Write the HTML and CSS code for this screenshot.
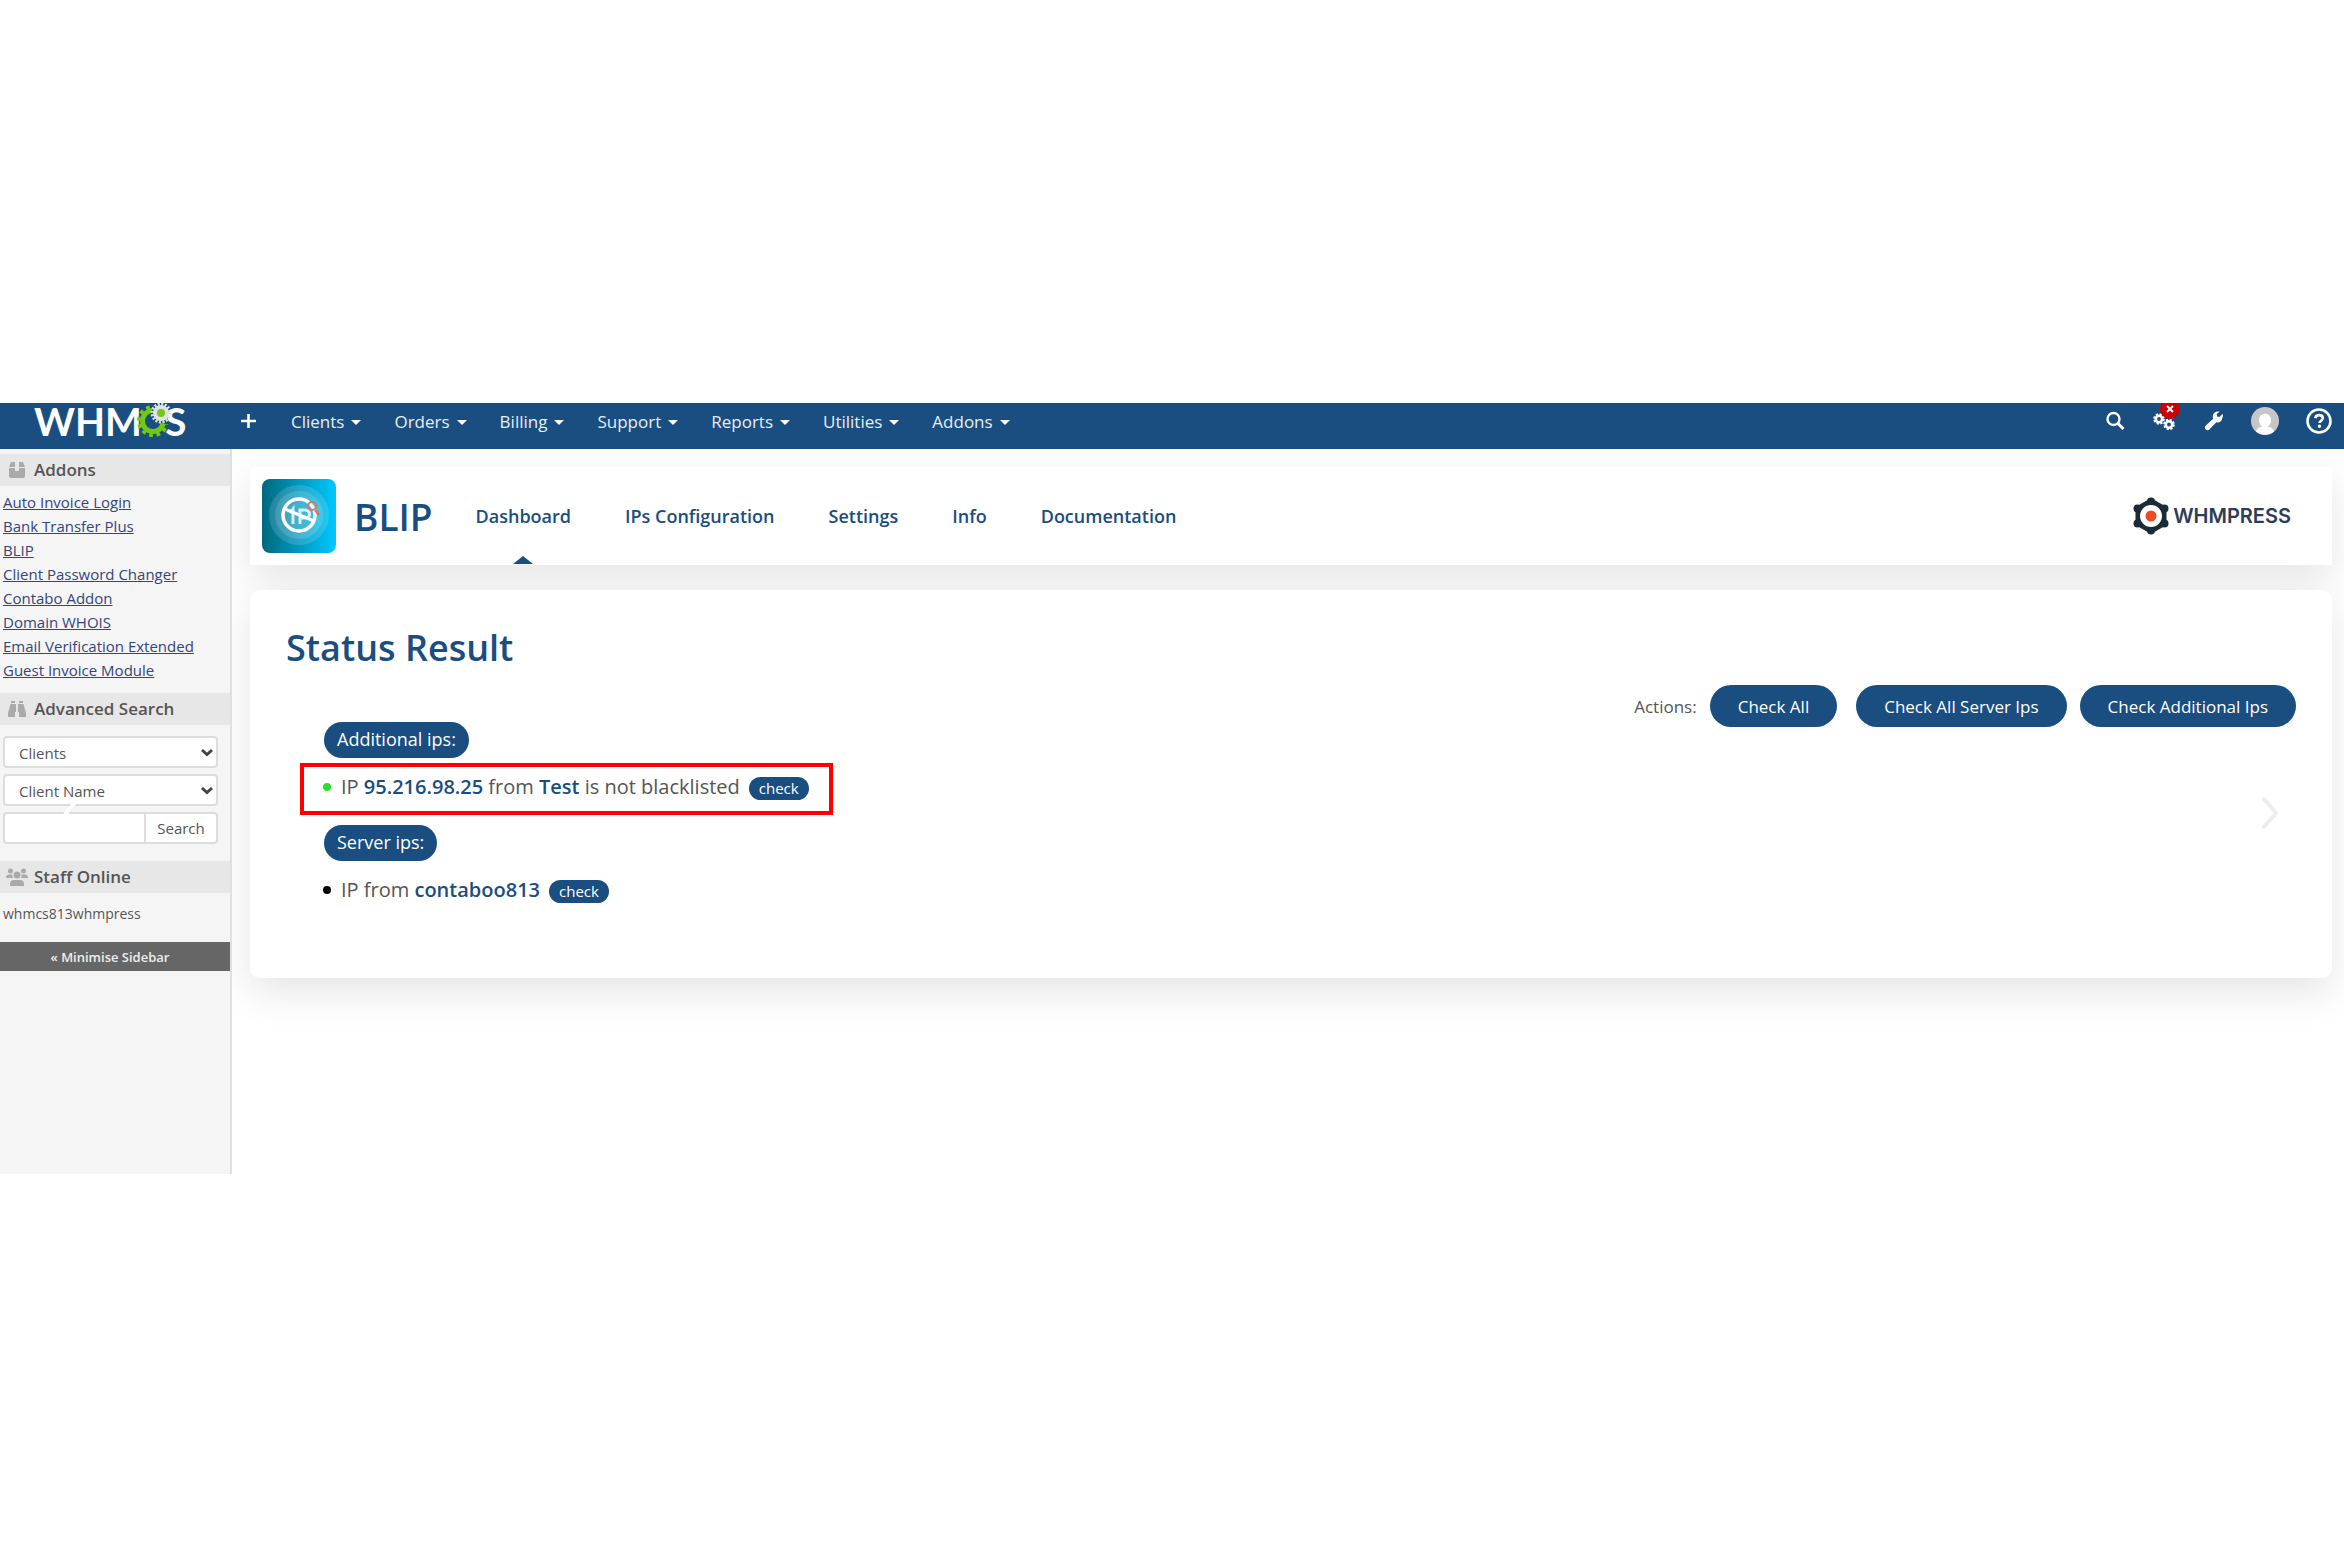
FILE: index.html
```html
<!DOCTYPE html>
<html lang="en">
<head>
<meta charset="utf-8">
<title>BLIP - Status Result</title>
<link rel="stylesheet" href="styles.css">
</head>
<body>
<div class="app">
  <header class="topbar">
    <a class="brand" href="#" aria-label="WHMCS">
      <svg width="156" height="46" viewBox="0 0 156 46">
        <text class="brand-text" x="-1" y="33">WHM</text>
        <circle cx="118" cy="18" r="10.500" fill="none" stroke="#70c912" stroke-width="5"/>
        <circle cx="118" cy="18" r="14" fill="none" stroke="#70c912" stroke-width="4" stroke-dasharray="3.700 3.630"/>
        <path d="M121 19l8-4 10 2-3 5-5-1z" fill="#1a4d80"/>
        <circle cx="126" cy="10" r="10" fill="#1a4d80"/>
        <text class="brand-text" x="130" y="33">S</text>
        <circle cx="126" cy="10" r="6" fill="#70c912" stroke="#dfe2df" stroke-width="4"/>
        <circle cx="126" cy="10" r="9" fill="none" stroke="#dfe2df" stroke-width="3" stroke-dasharray="2 1.534"/>
      </svg>
    </a>
    <nav class="menu">
      <a href="#" aria-label="Add"><svg width="15" height="16" viewBox="0 0 15 16"><path d="M7.500 1v14M0 8h15" stroke="#fff" stroke-width="2.600"/></svg></a>
      <a href="#">Clients <i class="caret"></i></a>
      <a href="#">Orders <i class="caret"></i></a>
      <a href="#">Billing <i class="caret"></i></a>
      <a href="#">Support <i class="caret"></i></a>
      <a href="#">Reports <i class="caret"></i></a>
      <a href="#">Utilities <i class="caret"></i></a>
      <a href="#">Addons <i class="caret"></i></a>
    </nav>
    <nav class="tools">
      <a href="#" aria-label="Search"><svg width="20" height="20" viewBox="0 0 20 20" fill="none" stroke="#fff"><circle cx="7.500" cy="8" r="6" stroke-width="2.400"/><path d="M12 12.500l5.500 5.500" stroke-width="3"/></svg></a>
      <a class="alerts" href="#" aria-label="Automation status"><svg width="24" height="20" viewBox="0 0 24 20" fill="none" stroke="#fff"><circle cx="6" cy="8" r="3.200" stroke-width="2.600"/><circle cx="6" cy="8" r="4.800" stroke-width="2" stroke-dasharray="2.200 1.570"/><circle cx="16" cy="13.500" r="3.200" stroke-width="2.600"/><circle cx="16" cy="13.500" r="4.800" stroke-width="2" stroke-dasharray="2.200 1.570"/></svg><span class="badge"><svg width="8" height="8" viewBox="0 0 8 8"><path d="M1 1l6 6M7 1l-6 6" stroke="#fff" stroke-width="2"/></svg></span></a>
      <a href="#" aria-label="Configuration"><svg width="20" height="20" viewBox="0 0 20 20"><path d="M18.600 6.200c.8-2 .2-3-.2-3.200L15.500 6l-2.300-.5-.5-2.400 2.800-2.400C12 .2 8.800 2 8.800 5.500c0 1 .1 1.500.4 2.200L1.800 14.500c-1.500 1.400-1 3.300.1 4.200s2.900.8 4-.6l6.400-6.800c3 .9 5.500-.9 6.300-5.100z" fill="#fff"/></svg></a>
      <a href="#" aria-label="My account"><svg width="28" height="28" viewBox="0 0 28 28"><circle cx="14" cy="14" r="14" fill="#c6c6c6"/><ellipse cx="14" cy="13.500" rx="6" ry="7" fill="#fff"/><path d="M5 24.500c1-4 5-5 9-5s8 1 9 5a14 14 0 0 1-18 0z" fill="#fff"/></svg></a>
      <a href="#" aria-label="Help"><svg width="26" height="26" viewBox="0 0 26 26" fill="none" stroke="#fff"><circle cx="13" cy="13" r="11.500" stroke-width="2.600"/><path d="M9.300 10.200c.4-2.300 2-3.100 3.800-3.100 2 0 3.700 1.100 3.700 3 0 2.500-3.300 2.600-3.300 4.900" stroke-width="2.600"/><circle cx="13.400" cy="18.300" r="1" stroke-width="1.500" fill="#fff"/></svg></a>
    </nav>
  </header>

  <div class="body">
    <aside class="sidebar">
      <h2 class="side-title"><svg width="18" height="18" viewBox="0 0 18 18" fill="#aaa"><path d="M3 1h4v5H1zM11 1h4l2 5h-6zM1 7h6v3h4V7h6v8a2 2 0 0 1-2 2H3a2 2 0 0 1-2-2z"/></svg>Addons</h2>
      <ul class="links">
        <li><a href="#">Auto Invoice Login</a></li>
        <li><a href="#">Bank Transfer Plus</a></li>
        <li><a href="#">BLIP</a></li>
        <li><a href="#">Client Password Changer</a></li>
        <li><a href="#">Contabo Addon</a></li>
        <li><a href="#">Domain WHOIS</a></li>
        <li><a href="#">Email Verification Extended</a></li>
        <li><a href="#">Guest Invoice Module</a></li>
      </ul>
      <h2 class="side-title"><svg width="18" height="18" viewBox="0 0 18 18" fill="#aaa"><path d="M3 1h4v2H3zM11 1h4v2h-4zM2.500 4H8v8H7v5H0v-4zM10 4h5.500L18 13v4h-7v-5h-1z"/></svg>Advanced Search</h2>
      <form class="search">
        <div class="pick">
          <select class="field" aria-label="Search type"><option>Clients</option></select>
          <svg class="arrow" width="14" height="9" viewBox="0 0 14 9"><path d="M2 2l5 4.500L12 2" fill="none" stroke="#444" stroke-width="3"/></svg>
        </div>
        <div class="pick">
          <select class="field" aria-label="Search field"><option>Client Name</option></select>
          <svg class="arrow" width="14" height="9" viewBox="0 0 14 9"><path d="M2 2l5 4.500L12 2" fill="none" stroke="#444" stroke-width="3"/></svg>
        </div>
        <div class="find">
          <input class="field" type="text" aria-label="Search term">
          <button class="find-button" type="button">Search</button>
        </div>
      </form>
      <h2 class="side-title"><svg width="22" height="18" viewBox="0 0 22 18" fill="#aaa"><circle cx="4.500" cy="3" r="2.500"/><circle cx="17.500" cy="3" r="2.500"/><circle cx="11" cy="7" r="3.500"/><path d="M0 10c0-2 1-3.500 3-3.500h3.500c-.5 2 .2 3 .8 3.500zM22 10c0-2-1-3.500-3-3.500h-3.500c.5 2-.2 3-.8 3.500zM4 18v-2c0-2.500 1.500-4 4-4h6c2.500 0 4 1.500 4 4v2z"/></svg>Staff Online</h2>
      <p class="staff">whmcs813whmpress</p>
      <button class="minimise" type="button">« Minimise Sidebar</button>
    </aside>

    <main class="content">
      <section class="card module">
        <svg width="74" height="74" viewBox="0 0 74 74">
          <defs><linearGradient id="tile"><stop offset="0" stop-color="#00687f"/><stop offset="1" stop-color="#00c8ff"/></linearGradient></defs>
          <rect width="74" height="74" rx="8" fill="url(#tile)"/>
          <circle cx="37" cy="36" r="30" fill="#fff" opacity=".14"/>
          <circle cx="37" cy="36" r="24" fill="#fff" opacity=".14"/>
          <g fill="none" stroke="#fff"><path d="M28 34l3-4v15M38 45V31h5c6 0 6 8 0 8h-5" stroke-width="3" opacity=".8"/><circle cx="37" cy="36" r="16" stroke-width="3.500"/><path d="M23 30l29 12" stroke-width="3"/></g>
          <g fill="none" stroke="#e2755f"><circle cx="50" cy="27" r="4" stroke-width="2"/><path d="M53 31l4 5" stroke-width="2.500"/></g>
        </svg>
        <h1 class="name">BLIP</h1>
        <nav class="tabs">
          <a class="active" href="#">Dashboard</a>
          <a href="#">IPs Configuration</a>
          <a href="#">Settings</a>
          <a href="#">Info</a>
          <a href="#">Documentation</a>
        </nav>
        <a class="vendor" href="#">
          <svg width="38" height="38" viewBox="0 0 38 38"><path d="M19 4l13 7.500v15L19 34 6 26.500v-15z" fill="#1b2b38" stroke="#1b2b38" stroke-width="5" stroke-linejoin="round"/><g fill="#1b2b38"><circle cx="19" cy="4.500" r="4"/><circle cx="32.500" cy="11.500" r="4"/><circle cx="32.500" cy="26.500" r="4"/><circle cx="19" cy="33.500" r="4"/><circle cx="5.500" cy="26.500" r="4"/><circle cx="5.500" cy="11.500" r="4"/></g><circle cx="19" cy="19" r="11" fill="#fff"/><circle cx="19" cy="19" r="5.500" fill="#f04a25"/></svg>
          WHMPRESS
        </a>
      </section>

      <section class="card status">
        <h2 class="title">Status Result</h2>
        <div class="actions">
          <span>Actions:</span>
          <button class="action lead" type="button">Check All</button>
          <button class="action" type="button">Check All Server Ips</button>
          <button class="action" type="button">Check Additional Ips</button>
        </div>
        <div class="results">
          <h3 class="group">Additional ips:</h3>
          <div class="row marked"><i class="dot ok"></i><p>IP <b>95.216.98.25</b> from <b>Test</b> is not blacklisted</p><button class="check" type="button">check</button></div>
          <h3 class="group">Server ips:</h3>
          <div class="row"><i class="dot"></i><p>IP from <b>contaboo813</b></p><button class="check" type="button">check</button></div>
        </div>
      </section>
    </main>
  </div>

  <button class="slide prev" type="button" aria-label="Previous"><svg width="20" height="34" viewBox="0 0 20 34"><path d="M16 3L4 17l12 14" fill="none" stroke="#fff" stroke-width="4" stroke-linecap="round"/></svg></button>
  <button class="slide next" type="button" aria-label="Next"><svg width="20" height="34" viewBox="0 0 20 34"><path d="M4 3l12 14L4 31" fill="none" stroke="#ededed" stroke-width="4" stroke-linecap="round"/></svg></button>
</div>
</body>
</html>
```
FILE: styles.css
```css
* {
  box-sizing: border-box;
}

body {
  margin: 0;
  padding-top: 403px;
  background: #fff;
  color: #555;
  font-family: "Open Sans", "Noto Sans", sans-serif;
  font-size: 17px;
}

h1, h2, h3, p, ul {
  margin: 0;
  padding: 0;
}

ul {
  list-style: none;
}

svg {
  display: block;
  flex: none;
}

a {
  color: inherit;
  text-decoration: none;
}

button, input, select {
  font: inherit;
  color: inherit;
}

.app {
  position: relative;
}

.topbar {
  display: flex;
  height: 46px;
  padding: 0 12px 0 35px;
  background: #1a4d80;
  color: #e8eef5;
}

.brand {
  width: 206px;
}

.brand svg {
  overflow: visible;
}

.brand-text {
  fill: #fff;
  font-family: Lato, sans-serif;
  font-size: 39px;
  font-weight: 700;
}

.menu, .tools {
  display: flex;
  align-items: center;
  height: 36px;
  gap: 33px;
}

.menu a {
  display: flex;
  align-items: center;
  gap: 7px;
}

.menu a:first-child {
  margin-right: 2px;
}

.caret {
  margin-top: 2px;
  border: 5px solid transparent;
  border-top-color: #fff;
  border-bottom: 0;
}

.tools {
  margin-left: auto;
  gap: 27px;
  overflow: hidden;
}

.alerts {
  position: relative;
}

.badge {
  position: absolute;
  top: -12px;
  right: -3px;
  display: grid;
  place-items: center;
  width: 20px;
  height: 20px;
  border-radius: 50%;
  background: #c00;
}

.body {
  display: flex;
}

.sidebar {
  flex: none;
  width: 232px;
  min-height: 725px;
  padding-top: 5px;
  border-right: 2px solid #e0e0e0;
  background: #f5f5f5;
  font-size: 15px;
}

.side-title {
  display: grid;
  grid-template-columns: 34px 1fr;
  align-items: center;
  height: 32px;
  padding-bottom: 1px;
  background: #e7e7e7;
  font-size: 17px;
  font-weight: 600;
}

.side-title svg {
  justify-self: center;
}

.links {
  padding: 4px 3px 11px;
  color: #34467a;
  line-height: 24px;
}

.links a {
  text-decoration: underline;
}

.search {
  display: grid;
  gap: 6px;
  padding: 11px 12px 17px 3px;
}

.pick {
  position: relative;
}

.field {
  display: block;
  width: 100%;
  height: 32px;
  padding: 2px 14px 0;
  appearance: none;
  border: 2px solid #ddd;
  border-radius: 4px;
  background: #fff;
}

.arrow {
  position: absolute;
  top: 12px;
  right: 4px;
}

.find {
  display: flex;
}

.find .field {
  flex: 1;
  min-width: 0;
  border-radius: 4px 0 0 4px;
}

.find-button {
  width: 72px;
  height: 32px;
  padding: 0;
  border: 2px solid #ddd;
  border-left: 0;
  border-radius: 0 4px 4px 0;
  background: #fff;
}

.staff {
  padding: 11px 3px 18px;
  font-size: 14px;
  line-height: 20px;
}

.minimise {
  display: block;
  width: 100%;
  height: 29px;
  padding: 0 10px 0 0;
  border: 0;
  background: #666;
  color: #eee;
  font-size: 13px;
  font-weight: 600;
}

.content {
  display: flex;
  flex: 1;
  flex-direction: column;
  gap: 25px;
  padding: 18px 12px 0 18px;
  overflow: hidden;
}

.card {
  background: #fff;
  box-shadow: 0 14px 40px rgba(0, 0, 0, .105);
}

.module {
  display: flex;
  align-items: center;
  height: 98px;
  padding: 0 41px 0 12px;
  color: #1a4d80;
}

.name {
  margin: 0 43px 0 18px;
  font-size: 37px;
  font-weight: 600;
}

.tabs {
  display: flex;
  align-self: stretch;
  gap: 54px;
  font-size: 18px;
  font-weight: 600;
  line-height: 98px;
}

.tabs a {
  position: relative;
}

.active::after {
  content: "";
  position: absolute;
  bottom: 1px;
  left: 50%;
  margin-left: -10px;
  border: 10px solid transparent;
  border-top: 0;
  border-bottom: 8px solid #1a4d80;
}

.vendor {
  display: flex;
  align-items: center;
  gap: 3px;
  margin-left: auto;
  color: #2c3e57;
  font-family: Inter, sans-serif;
  font-size: 20px;
  font-weight: 600;
}

.status {
  position: relative;
  min-height: 388px;
  padding: 34px 36px 0;
  border-radius: 10px;
}

.title {
  color: #1a4d80;
  font-size: 36px;
  font-weight: 600;
  line-height: 48px;
}

.actions {
  display: flex;
  align-items: center;
  justify-content: flex-end;
  gap: 13px;
  margin-top: 13px;
}

.action {
  height: 42px;
  padding: 0 28px;
  border: 0;
  border-radius: 21px;
  background: #1a4d80;
  color: #fff;
}

.lead {
  margin-right: 6px;
}

.results {
  display: flex;
  flex-direction: column;
  align-items: flex-start;
  margin-top: -5px;
  padding-left: 14px;
}

.group {
  height: 36px;
  margin-left: 24px;
  padding: 0 13px;
  border-radius: 18px;
  background: #1a4d80;
  color: #fff;
  font-size: 18px;
  font-weight: 400;
  line-height: 34px;
}

.row {
  display: flex;
  align-items: center;
  height: 52px;
  margin: 5px 0 10px;
  padding: 0 20px 5px 19px;
  border: 4px solid transparent;
  font-size: 20px;
}

.marked {
  border-color: #f00;
}

.row b {
  color: #1a4d80;
  font-weight: 600;
}

.dot {
  width: 8px;
  height: 8px;
  margin-right: 10px;
  border-radius: 50%;
  background: #000;
}

.ok {
  background: #2bdc2b;
}

.check {
  height: 23px;
  margin: 4px 0 0 9px;
  padding: 0 10px 2px;
  border: 0;
  border-radius: 12px;
  background: #1a4d80;
  color: #fff;
  font-size: 15px;
  line-height: 20px;
}

.slide {
  position: absolute;
  top: 393px;
  padding: 0;
  border: 0;
  background: none;
}

.prev {
  left: 62px;
}

.next {
  right: 64px;
}
```
